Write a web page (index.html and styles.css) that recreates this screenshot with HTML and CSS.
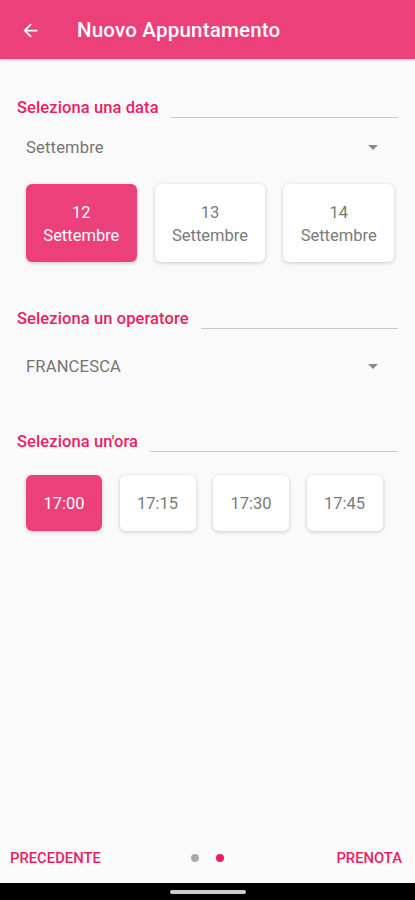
FILE: index.html
```html
<!DOCTYPE html>
<html lang="it">
<head>
  <meta charset="UTF-8">
  <meta name="viewport" content="width=device-width, initial-scale=1.0">
  <title>Nuovo Appuntamento</title>
  <link rel="stylesheet" href="styles.css">
</head>
<body>
  <div class="app">
    <header class="toolbar">
      <svg class="back" width="21" height="21" viewBox="0 0 24 24">
        <path d="M20 11H7.83l5.59-5.59L12 4l-8 8 8 8 1.41-1.41L7.83 13H20v-2z" fill="#fff"/>
      </svg>
      <h1>Nuovo Appuntamento</h1>
    </header>

    <main class="content">
      <div class="section-title first">
        <span>Seleziona una data</span>
        <div class="rule"></div>
      </div>
      <div class="dropdown">
        <span>Settembre</span>
        <span class="caret"></span>
      </div>
      <div class="days">
        <div class="card day active">12<br>Settembre</div>
        <div class="card day">13<br>Settembre</div>
        <div class="card day">14<br>Settembre</div>
      </div>

      <div class="section-title second">
        <span>Seleziona un operatore</span>
        <div class="rule"></div>
      </div>
      <div class="dropdown operator">
        <span>FRANCESCA</span>
        <span class="caret"></span>
      </div>

      <div class="section-title third">
        <span>Seleziona un'ora</span>
        <div class="rule"></div>
      </div>
      <div class="hours">
        <div class="card hour active">17:00</div>
        <div class="card hour">17:15</div>
        <div class="card hour">17:30</div>
        <div class="card hour">17:45</div>
      </div>
    </main>

    <footer class="stepper">
      <span class="btn">PRECEDENTE</span>
      <div class="dots">
        <span class="dot"></span>
        <span class="dot on"></span>
      </div>
      <span class="btn">PRENOTA</span>
    </footer>
    <div class="navbar"><span class="handle"></span></div>
  </div>
</body>
</html>
```

FILE: styles.css
```css
* {
  box-sizing: border-box;
}

body {
  margin: 0;
  font-family: Roboto, 'Noto Sans', sans-serif;
  background: #fafafa;
}

.app {
  display: flex;
  flex-direction: column;
  height: 900px;
}

.toolbar {
  height: 59px;
  background: #ec407a;
  display: flex;
  align-items: center;
  padding-left: 20px;
  box-shadow: 0 1px 3px rgba(0, 0, 0, 0.15);
}

.toolbar .back {
  margin-top: 1px;
}

.toolbar h1 {
  margin: 0 0 0 36px;
  color: #fff;
  font-size: 20.5px;
  font-weight: 500;
  letter-spacing: 0.2px;
}

.content {
  flex: 1;
}

.section-title {
  display: flex;
  align-items: flex-end;
  padding: 0 17px;
  height: 22px;
  line-height: 20px;
  color: #e91e63;
  font-size: 16.5px;
  font-weight: 500;
  letter-spacing: 0.1px;
}

.section-title .rule {
  flex: 1;
  margin-left: 12px;
  margin-bottom: 0;
  border-bottom: 1px solid #c8c8c8;
}

.section-title.first {
  margin-top: 37px;
}

.section-title.second {
  margin-top: 45px;
}

.section-title.third {
  margin-top: 52px;
}

.dropdown {
  display: flex;
  justify-content: space-between;
  align-items: center;
  height: 24px;
  margin: 17px 37px 0 26px;
  color: #757575;
  font-size: 16.5px;
  letter-spacing: 0.2px;
}

.dropdown.operator {
  margin-top: 25px;
}

.caret {
  width: 0;
  height: 0;
  border-left: 5px solid transparent;
  border-right: 5px solid transparent;
  border-top: 5px solid #8a8a8a;
}

.card {
  background: #fff;
  border-radius: 6px;
  box-shadow: 0 1px 4px rgba(0, 0, 0, 0.2);
  color: #7a7a7a;
  font-size: 16.5px;
  text-align: center;
  display: flex;
  align-items: center;
  justify-content: center;
}

.card.active {
  background: #ec407a;
  color: #fff;
}

.days {
  display: flex;
  gap: 18px;
  margin: 25px 21px 0 26px;
}

.day {
  flex: 1;
  height: 78px;
  line-height: 23px;
  padding-top: 2px;
}

.hours {
  display: flex;
  gap: 17.5px;
  margin: 23px 0 0 26px;
}

.hour {
  width: 76px;
  height: 56px;
}

.stepper {
  display: flex;
  align-items: center;
  height: 50px;
  padding: 0 13px 0 10px;
  color: #e91e63;
  font-size: 14.8px;
  font-weight: 500;
}

.dots {
  display: flex;
  gap: 17px;
  margin-left: 90px;
}

.stepper .btn:last-child {
  margin-left: auto;
}

.dot {
  width: 8px;
  height: 8px;
  border-radius: 50%;
  background: #aaa;
}

.dot.on {
  background: #e91e63;
}

.navbar {
  height: 17px;
  background: #000;
  display: flex;
  justify-content: center;
  align-items: center;
}

.handle {
  width: 76px;
  height: 4px;
  border-radius: 2px;
  background: #ccc;
}
```
